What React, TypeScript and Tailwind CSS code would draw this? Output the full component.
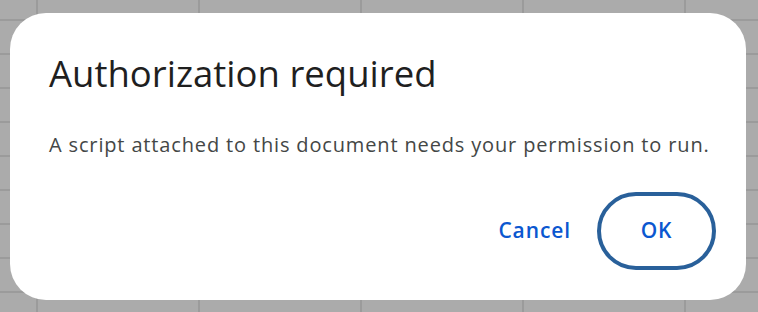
export default function App() {
  return (
    <div className="w-[758px] h-[312px] overflow-hidden bg-[#ababab] bg-[linear-gradient(to_right,#9b9b9b_2px,transparent_2px),linear-gradient(to_bottom,#9b9b9b_2px,transparent_2px)] bg-[length:162px_34px] bg-[position:36px_19px] pt-[13px] pl-[10px]">
      <div className="w-[736px] h-[287px] rounded-[36px] bg-white flex flex-col pl-[39px] pr-[30px] pt-[40px]">
        <h1 className="text-[36.5px] leading-[40px] text-[#1f1f1f] font-['Open_Sans',sans-serif]">
          Authorization required
        </h1>
        <p className="mt-[40px] text-[20px] leading-[24px] tracking-[0.85px] text-[#444746] font-['Open_Sans',sans-serif]">
          A script attached to this document needs your permission to run.
        </p>
        <div className="mt-[35px] flex justify-end items-center gap-[26px]">
          <button className="text-[21px] font-semibold tracking-[0.9px] text-[#0b57d0] font-['Open_Sans',sans-serif]">
            Cancel
          </button>
          <button className="w-[119px] h-[78px] rounded-full border-[4px] border-[#29609a] text-[21px] font-semibold tracking-[0.9px] text-[#0b57d0] font-['Open_Sans',sans-serif]">
            OK
          </button>
        </div>
      </div>
    </div>
  );
}
